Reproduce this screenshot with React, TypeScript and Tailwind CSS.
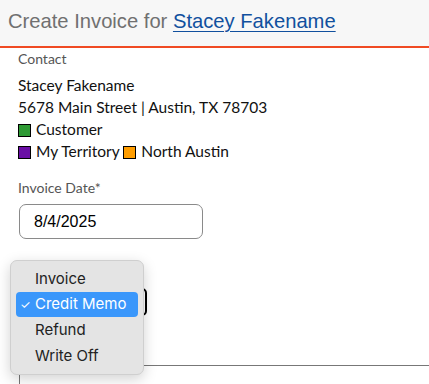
import React from 'react';

const Swatch: React.FC<{ color: string }> = ({ color }) => (
  <span className={`inline-block w-[13px] h-[13px] border border-black mr-[5px] align-[-2px] ${color}`} />
);

const App: React.FC = () => {
  const options = ['Invoice', 'Credit Memo', 'Refund', 'Write Off'];

  return (
    <div className="w-[429px] h-[384px] overflow-hidden bg-white relative font-['Lato','Liberation_Sans',sans-serif]">
      {/* Header */}
      <div className="h-[48px] bg-[#f7f7f7] border-b-2 border-[#f04a23] flex items-center pl-[8px] pb-[4px]">
        <h1 className="text-[20.2px] text-[#707070] font-['Liberation_Sans',sans-serif] leading-none">
          Create Invoice for{' '}
          <a href="#" className="text-[#11509e] underline decoration-[1px] underline-offset-[3px]">
            Stacey Fakename
          </a>
        </h1>
      </div>

      <div className="pl-[18px] pt-[2px]">
        <div className="text-[14px] text-[#555] leading-[18px]">Contact</div>
        <div className="mt-[6px] text-[15.5px] text-[#111] leading-[22px]">
          <div>Stacey Fakename</div>
          <div>5678 Main Street | Austin, TX 78703</div>
          <div>
            <Swatch color="bg-[#2e9a34]" />Customer
          </div>
          <div>
            <Swatch color="bg-[#6a0ea5]" />My Territory <Swatch color="bg-[#ff9d00]" />North Austin
          </div>
        </div>

        <div className="mt-[17px] text-[14px] text-[#555] leading-[18px]">Invoice Date*</div>
        <div className="mt-[7px] ml-[1px] w-[184px] h-[35px] border border-[#8a8a8a] rounded-[7px] flex items-center pl-[14px] text-[16px] text-black font-['Liberation_Sans',sans-serif]">
          8/4/2025
        </div>

        {/* Select behind native menu */}
        <div className="mt-[49px] ml-[1px] w-[128px] h-[28px] border-2 border-black rounded-[5px]" />

        {/* Textarea-ish box */}
        <div className="mt-[49px] ml-[1px] h-[40px] border-t border-l border-[#777]" />
      </div>

      {/* Native dropdown menu */}
      <div className="absolute left-[10px] top-[260px] w-[134px] bg-[#e4e4e4] rounded-[7px] border border-[#cfcfcf] shadow-[0_4px_14px_rgba(0,0,0,0.18)] py-[5px] px-[5px] font-['Inter','Liberation_Sans',sans-serif] text-[15px]">
        {options.map((o) => (
          <div
            key={o}
            className={`h-[25.7px] flex items-center rounded-[4px] pl-[19px] relative ${
              o === 'Credit Memo' ? 'bg-[#3a97fb] text-white' : 'text-[#222]'
            }`}
          >
            {o === 'Credit Memo' && <span className="absolute left-[4px] text-[12px]">✓</span>}
            {o}
          </div>
        ))}
      </div>
    </div>
  );
};

export default App;
